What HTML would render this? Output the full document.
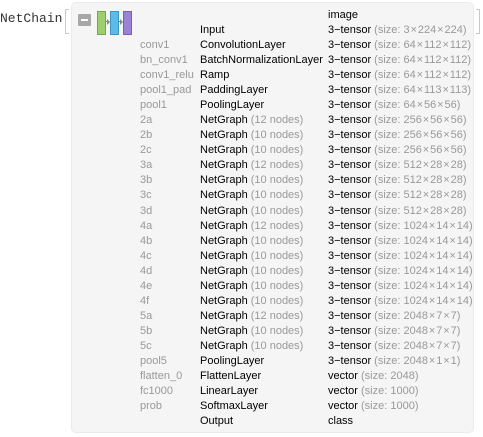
<!DOCTYPE html><html><head><style>
body{margin:0;width:483px;height:437px;background:#fff;position:relative;overflow:hidden;font-family:"Liberation Sans",sans-serif;}
.nc{position:absolute;left:0;top:11px;font-family:"Liberation Mono",monospace;font-size:13px;color:#333;}
.br{position:absolute;top:9px;width:3px;height:23px;border:1px solid #bcd;}
.box{position:absolute;left:71px;top:2px;width:403px;height:431px;background:#f5f5f5;border:1px solid #ebebeb;border-radius:5px;box-sizing:border-box;}
.r{position:absolute;font-size:11px;color:#000;line-height:13px;white-space:nowrap;}
.g{color:#999;}
</style></head><body>
<div class="nc">NetChain</div>
<div class="br" style="left:65px;border-right:none"></div>
<div class="br" style="left:476px;border-left:none"></div>
<div class="box"></div>
<div style="position:absolute;left:78px;top:14px;width:13px;height:12px;background:#a8a8a8;border-radius:1px"><div style="position:absolute;left:3px;top:5px;width:7px;height:2px;background:#fff"></div></div>
<div style="position:absolute;left:97px;top:11px;width:7px;height:22px;background:#9ccf6e;border:1px solid #72a84c"></div>
<div style="position:absolute;left:110px;top:11px;width:7px;height:22px;background:#5bbde6;border:1px solid #3a96c0"></div>
<div style="position:absolute;left:123px;top:11px;width:7px;height:22px;background:#9a82d6;border:1px solid #7660b4"></div>
<div style="position:absolute;left:106px;top:21px;width:3px;height:1px;background:#888"></div>
<div style="position:absolute;left:107px;top:19px;border-left:3px solid #888;border-top:3px solid transparent;border-bottom:3px solid transparent"></div>
<div style="position:absolute;left:119px;top:21px;width:3px;height:1px;background:#888"></div>
<div style="position:absolute;left:120px;top:19px;border-left:3px solid #888;border-top:3px solid transparent;border-bottom:3px solid transparent"></div>
<div id="rows"></div>
<script>
var d=[["","","image",""],["","Input","3−tensor","3×224×224"],["conv1","ConvolutionLayer","3−tensor","64×112×112"],["bn_conv1","BatchNormalizationLayer","3−tensor","64×112×112"],["conv1_relu","Ramp","3−tensor","64×112×112"],["pool1_pad","PaddingLayer","3−tensor","64×113×113"],["pool1","PoolingLayer","3−tensor","64×56×56"],
["2a","NetGraph|12","3−tensor","256×56×56"],["2b","NetGraph|10","3−tensor","256×56×56"],["2c","NetGraph|10","3−tensor","256×56×56"],
["3a","NetGraph|12","3−tensor","512×28×28"],["3b","NetGraph|10","3−tensor","512×28×28"],["3c","NetGraph|10","3−tensor","512×28×28"],["3d","NetGraph|10","3−tensor","512×28×28"],
["4a","NetGraph|12","3−tensor","1024×14×14"],["4b","NetGraph|10","3−tensor","1024×14×14"],["4c","NetGraph|10","3−tensor","1024×14×14"],["4d","NetGraph|10","3−tensor","1024×14×14"],["4e","NetGraph|10","3−tensor","1024×14×14"],["4f","NetGraph|10","3−tensor","1024×14×14"],
["5a","NetGraph|12","3−tensor","2048×7×7"],["5b","NetGraph|10","3−tensor","2048×7×7"],["5c","NetGraph|10","3−tensor","2048×7×7"],
["pool5","PoolingLayer","3−tensor","2048×1×1"],["flatten_0","FlattenLayer","vector","2048"],["fc1000","LinearLayer","vector","1000"],["prob","SoftmaxLayer","vector","1000"],["","Output","class",""]];
var h="";d.forEach(function(r,i){var y=Math.round(9+i*15.04);var l=r[1];if(l.indexOf("|")>0){var p=l.split("|");l=p[0]+' <span class="g">('+p[1]+' nodes)</span>';}
var s=r[3].replace(/×/g,"\u200A×\u200A");
h+='<div class="r g" style="left:140px;top:'+y+'px">'+r[0]+'</div><div class="r" style="left:200px;top:'+y+'px">'+l+'</div><div class="r" style="left:328px;top:'+y+'px">'+r[2]+(r[3]?' <span class="g">(size: '+s+')</span>':'')+'</div>';});
document.getElementById("rows").innerHTML=h;
</script>
</body></html>
